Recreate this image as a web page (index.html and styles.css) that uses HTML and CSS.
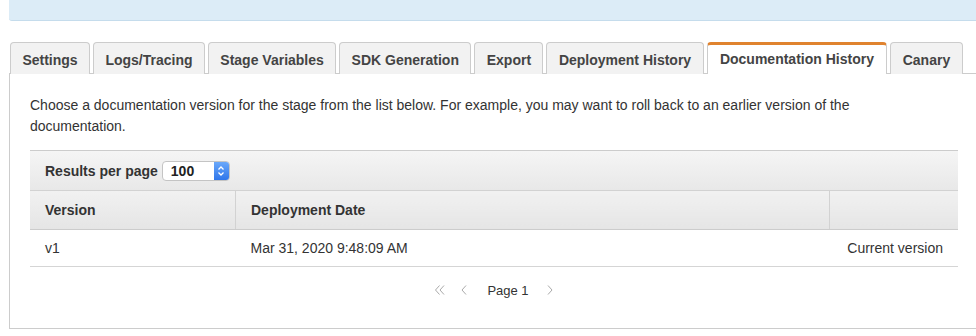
FILE: index.html
```html
<!DOCTYPE html>
<html lang="en">
<head>
    <meta charset="UTF-8">
    <title>Documentation History</title>
    <link rel="stylesheet" href="styles.css">
</head>
<body>
    <div class="page">
        <div class="notice"></div>

        <ul class="tabs">
            <li class="tab">Settings</li>
            <li class="tab">Logs/Tracing</li>
            <li class="tab">Stage Variables</li>
            <li class="tab">SDK Generation</li>
            <li class="tab">Export</li>
            <li class="tab">Deployment History</li>
            <li class="tab active">Documentation History</li>
            <li class="tab">Canary</li>
        </ul>

        <div class="panel">
            <p class="intro">Choose a documentation version for the stage from the list below. For example, you may want to roll back to an earlier version of the documentation.</p>

            <div class="grid">
                <div class="toolbar">
                    <span class="label">Results per page</span>
                    <span class="select">
                        <span class="select-value">100</span>
                        <span class="stepper">
                            <svg width="8" height="12" viewBox="0 0 8 12"><polyline points="1.5,4.5 4,2 6.5,4.5" fill="none" stroke="#fff" stroke-width="1.3"/><polyline points="1.5,7.5 4,10 6.5,7.5" fill="none" stroke="#fff" stroke-width="1.3"/></svg>
                        </span>
                    </span>
                </div>
                <table>
                    <thead>
                        <tr>
                            <th class="col-version">Version</th>
                            <th class="col-date">Deployment Date</th>
                            <th class="col-status"></th>
                        </tr>
                    </thead>
                    <tbody>
                        <tr>
                            <td>v1</td>
                            <td>Mar 31, 2020 9:48:09 AM</td>
                            <td class="status">Current version</td>
                        </tr>
                    </tbody>
                </table>
            </div>

            <div class="pager">
                <svg class="pager-icon" width="12" height="12" viewBox="0 0 12 12"><polyline points="5.5,1.5 1.5,6 5.5,10.5" fill="none" stroke="#aaa" stroke-width="1"/><polyline points="10,1.5 6,6 10,10.5" fill="none" stroke="#aaa" stroke-width="1"/></svg>
                <svg class="pager-icon" width="8" height="12" viewBox="0 0 8 12"><polyline points="6,1.5 2,6 6,10.5" fill="none" stroke="#aaa" stroke-width="1"/></svg>
                <span class="pager-text">Page 1</span>
                <svg class="pager-icon" width="8" height="12" viewBox="0 0 8 12"><polyline points="2,1.5 6,6 2,10.5" fill="none" stroke="#aaa" stroke-width="1"/></svg>
            </div>
        </div>
    </div>
</body>
</html>
```

FILE: styles.css
```css
body {
    margin: 0;
    background-color: #fff;
    color: #333;
    font-family: "Liberation Sans", Arial, sans-serif;
    font-size: 14px;
    overflow: hidden;
}
.page {
    padding-left: 9px;
    width: 970px;
}
.notice {
    height: 20px;
    background-color: #dcecf7;
    border-bottom: 1px solid #c5dcec;
    border-bottom-left-radius: 3px;
}
.tabs {
    display: flex;
    gap: 3px;
    list-style: none;
    margin: 21px 0 0 0;
    padding: 0 0 0 1px;
}
.tab {
    height: 28px;
    line-height: 28px;
    padding: 3px 11.4px 0 11.4px;
    background-color: #f2f2f2;
    border: 1px solid #ccc;
    border-bottom: none;
    border-radius: 4px 4px 0 0;
    color: #444;
    font-weight: bold;
    white-space: nowrap;
    margin-bottom: -1px;
    position: relative;
}
.tab.active {
    background-color: #fff;
    border-top: 3px solid #e0832f;
    height: 29px;
    line-height: 29px;
    padding: 0 12.4px;
    z-index: 1;
}
.panel {
    border: 1px solid #ccc;
    padding: 0 20px;
    height: 254px;
}
.intro {
    margin: 21px 0 0 0;
    max-width: 860px;
    line-height: 21px;
    color: #333;
}
.grid {
    margin-top: 13px;
    border-top: 1px solid #ccc;
}
.toolbar {
    display: flex;
    align-items: center;
    height: 39px;
    padding: 0 15px;
    background: linear-gradient(#f5f5f5, #e8e8e8);
    border-bottom: 1px solid #d2d2d2;
}
.label {
    font-weight: bold;
    color: #333;
}
.select {
    display: flex;
    align-items: stretch;
    margin-left: 4px;
    width: 66px;
    height: 18px;
    border: 1px solid #c4c4c4;
    border-radius: 4px;
    background-color: #fff;
    overflow: hidden;
}
.select-value {
    flex: 1;
    padding-left: 8px;
    font-weight: bold;
    line-height: 18px;
    color: #222;
}
.stepper {
    width: 15px;
    display: flex;
    align-items: center;
    justify-content: center;
    background: linear-gradient(#6aa8fa, #2f76ea);
}
table {
    width: 100%;
    border-collapse: collapse;
}
th {
    height: 38px;
    padding: 0 15px;
    text-align: left;
    font-weight: bold;
    color: #333;
    background: linear-gradient(#f1f1f1, #e5e5e5);
    border-bottom: 1px solid #ccc;
    border-left: 1px solid #d2d2d2;
}
th:first-child {
    border-left: none;
}
.col-version {
    width: 175px;
}
.col-status {
    width: 98px;
}
td {
    height: 36px;
    padding: 0 15px;
    border-bottom: 1px solid #d5d5d5;
    color: #333;
}
td.status {
    text-align: right;
}
.pager {
    display: flex;
    align-items: center;
    justify-content: center;
    margin-top: 13px;
    height: 20px;
}
.pager-icon {
    margin: 0 7px;
}
.pager-text {
    margin: 0 10px 0 12px;
    color: #333;
    font-size: 13px;
}
```
